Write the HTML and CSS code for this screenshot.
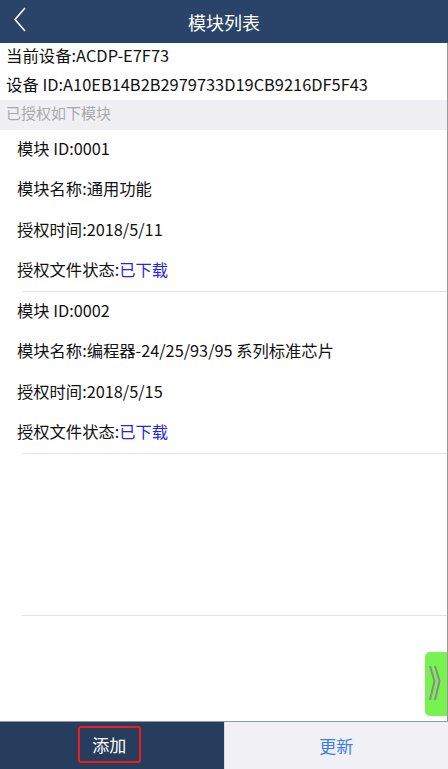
FILE: index.html
```html
<!DOCTYPE html>
<html lang="zh-CN">
<head>
<meta name="viewport" content="width=device-width, initial-scale=1.0">
<meta charset="UTF-8">
<title>模块列表</title>
<link rel="stylesheet" href="styles.css">
</head>
<body>

<div class="page">
<div class="header">
<svg class="back" width="14" height="26" viewBox="0 0 14 26"><polyline points="12,1 2,12.5 12,24" fill="none" stroke="#fff" stroke-width="1.6"/></svg>
<div class="title">模块列表</div>
</div>

<div class="main">
<div class="info">当前设备:ACDP-E7F73</div>
<div class="info">设备 ID:A10EB14B2B2979733D19CB9216DF5F43</div>
<div class="section">已授权如下模块</div>

<div class="module">
<div class="row">模块 ID:0001</div>
<div class="row">模块名称:通用功能</div>
<div class="row">授权时间:2018/5/11</div>
<div class="row">授权文件状态:<span class="done">已下载</span></div>
</div>

<div class="module">
<div class="row">模块 ID:0002</div>
<div class="row">模块名称:编程器-24/25/93/95 系列标准芯片</div>
<div class="row">授权时间:2018/5/15</div>
<div class="row">授权文件状态:<span class="done">已下载</span></div>
</div>

<div class="module empty"></div>

<div class="tab">
<svg width="22" height="64" viewBox="0 0 22 64"><polyline points="5,14 9.5,29 5,48" fill="none" stroke="#8b8b8b" stroke-width="2"/><polyline points="10,14 14.5,29 10,48" fill="none" stroke="#8b8b8b" stroke-width="2"/></svg>
</div>
</div>

<div class="footer">
<div class="fbtn add"><span class="mark">添加</span></div>
<div class="fbtn upd">更新</div>
</div>
</div>

</body>
</html>
```

FILE: styles.css
```css
*{box-sizing:border-box;}

body{
margin:0;
font-family:"Noto Sans CJK SC","Liberation Sans",sans-serif;
color:#111;
background:#fff;
}

.page{
height:100vh;
display:flex;
flex-direction:column;
}

.header{
height:43px;
flex:none;
background:rgb(42,67,105);
display:flex;
align-items:center;
justify-content:center;
position:relative;
}

.back{
position:absolute;
left:13px; top:7px;
}

.title{
color:#fff;
font-size:18px;
line-height:40px;
}

.main{
flex:1;
position:relative;
border-right:1px solid #9a9a9a;
overflow:hidden;
}

.info{
height:29px;
line-height:25px;
padding-left:6px;
font-size:16.4px;
}

.info + .info{height:28px;}

.section{
height:30px;
line-height:26px;
padding-left:6px;
font-size:15px;
color:#a9a9ad;
background:#f0eff4;
}

.module{
padding-left:17px;
}

.module::after{
content:"";
display:block;
height:1px;
margin-left:5px;
background:#e3e3e6;
}

.row{
height:40.25px;
line-height:37px;
font-size:16.3px;
}

.done{color:#1f24f0;}

.empty{padding-top:161px;}

.tab{
position:absolute;
right:0; bottom:5px;
width:22px; height:64px;
background:#78f251;
border-radius:5px 0 0 5px;
}

.tab svg{display:block;}

.footer{
height:48px;
flex:none;
display:flex;
border-top:1px solid #8e97a6;
}

.fbtn{
flex:1;
display:flex;
align-items:center;
justify-content:center;
font-size:17px;
line-height:30px;
}

.add{
background:rgb(38,61,94);
color:#fff;
border-right:1px solid #d8d8de;
}

.mark{
width:63px; height:37px;
margin-left:-5px;
margin-top:-2px;
border:2px solid #f21b1b;
border-radius:3px;
display:flex;
align-items:center;
justify-content:center;
}

.upd{
background:#f1f0f5;
color:#3b7cf0;
}
```
